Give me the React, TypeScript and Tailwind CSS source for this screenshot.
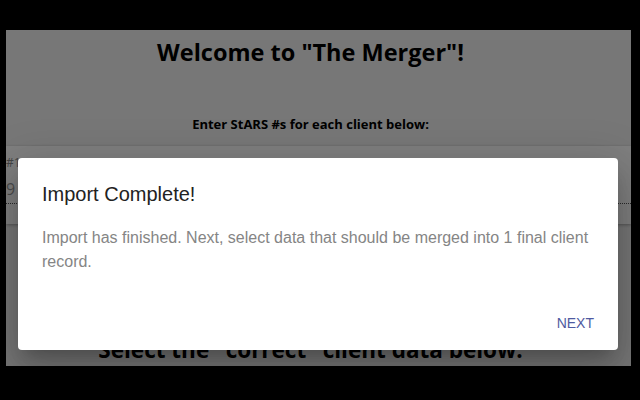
export default function App() {
  return (
    <div className="relative h-[400px] w-[640px] overflow-hidden bg-black pl-[6px] pt-[30px]">
      <div
        className="relative h-[336px] w-[625px] overflow-hidden bg-[#eeeeee]"
        style={{ fontFamily: '"Open Sans", "Noto Sans", sans-serif' }}
      >
        <h1 className="pr-[16px] pt-[5px] text-center text-[23.5px] font-bold leading-[34px] text-black">
          Welcome to "The Merger"!
        </h1>
        <p className="mt-[45px] pr-[16px] text-center text-[13px] font-bold leading-[20px] text-black">
          Enter StARS #s for each client below:
        </p>
        <div className="mt-[12px] h-[78px] bg-white pt-[10px] shadow-[0_1px_3px_rgba(0,0,0,0.3)]">
          <div className="text-[12px] leading-[14px] text-[#8a8a8a]">#1</div>
          <div className="mt-[9px] border-b border-dotted border-[#555] pb-[4px] text-[16px] leading-[20px] text-[#9a9a9a]">
            9
          </div>
        </div>
        <h2 className="mt-[111px] pr-[16px] text-center text-[22.5px] font-bold leading-[30px] text-black">
          Select the "correct" client data below:
        </h2>

        <div className="absolute inset-0 bg-black/50">
          <div
            className="absolute left-[12px] top-[128px] flex h-[192px] w-[600px] flex-col rounded-[4px] bg-white shadow-[0_11px_15px_-7px_rgba(0,0,0,0.2),0_24px_38px_3px_rgba(0,0,0,0.14),0_9px_46px_8px_rgba(0,0,0,0.12)]"
            style={{ fontFamily: '"Liberation Sans", Arial, sans-serif' }}
          >
            <div className="px-[24px] pt-[22px] text-[20px] leading-[28px] text-[#222]">
              Import Complete!
            </div>
            <p className="mt-[18px] px-[24px] text-[16px] leading-[24px] text-[#858585]">
              Import has finished. Next, select data that should be merged into 1 final client record.
            </p>
            <div className="mt-auto flex justify-end px-[16px] pb-[10px]">
              <button className="px-[8px] py-[6px] text-[14px] uppercase leading-[22px] text-[#4f5aa0]">
                Next
              </button>
            </div>
          </div>
        </div>
      </div>
    </div>
  );
}
